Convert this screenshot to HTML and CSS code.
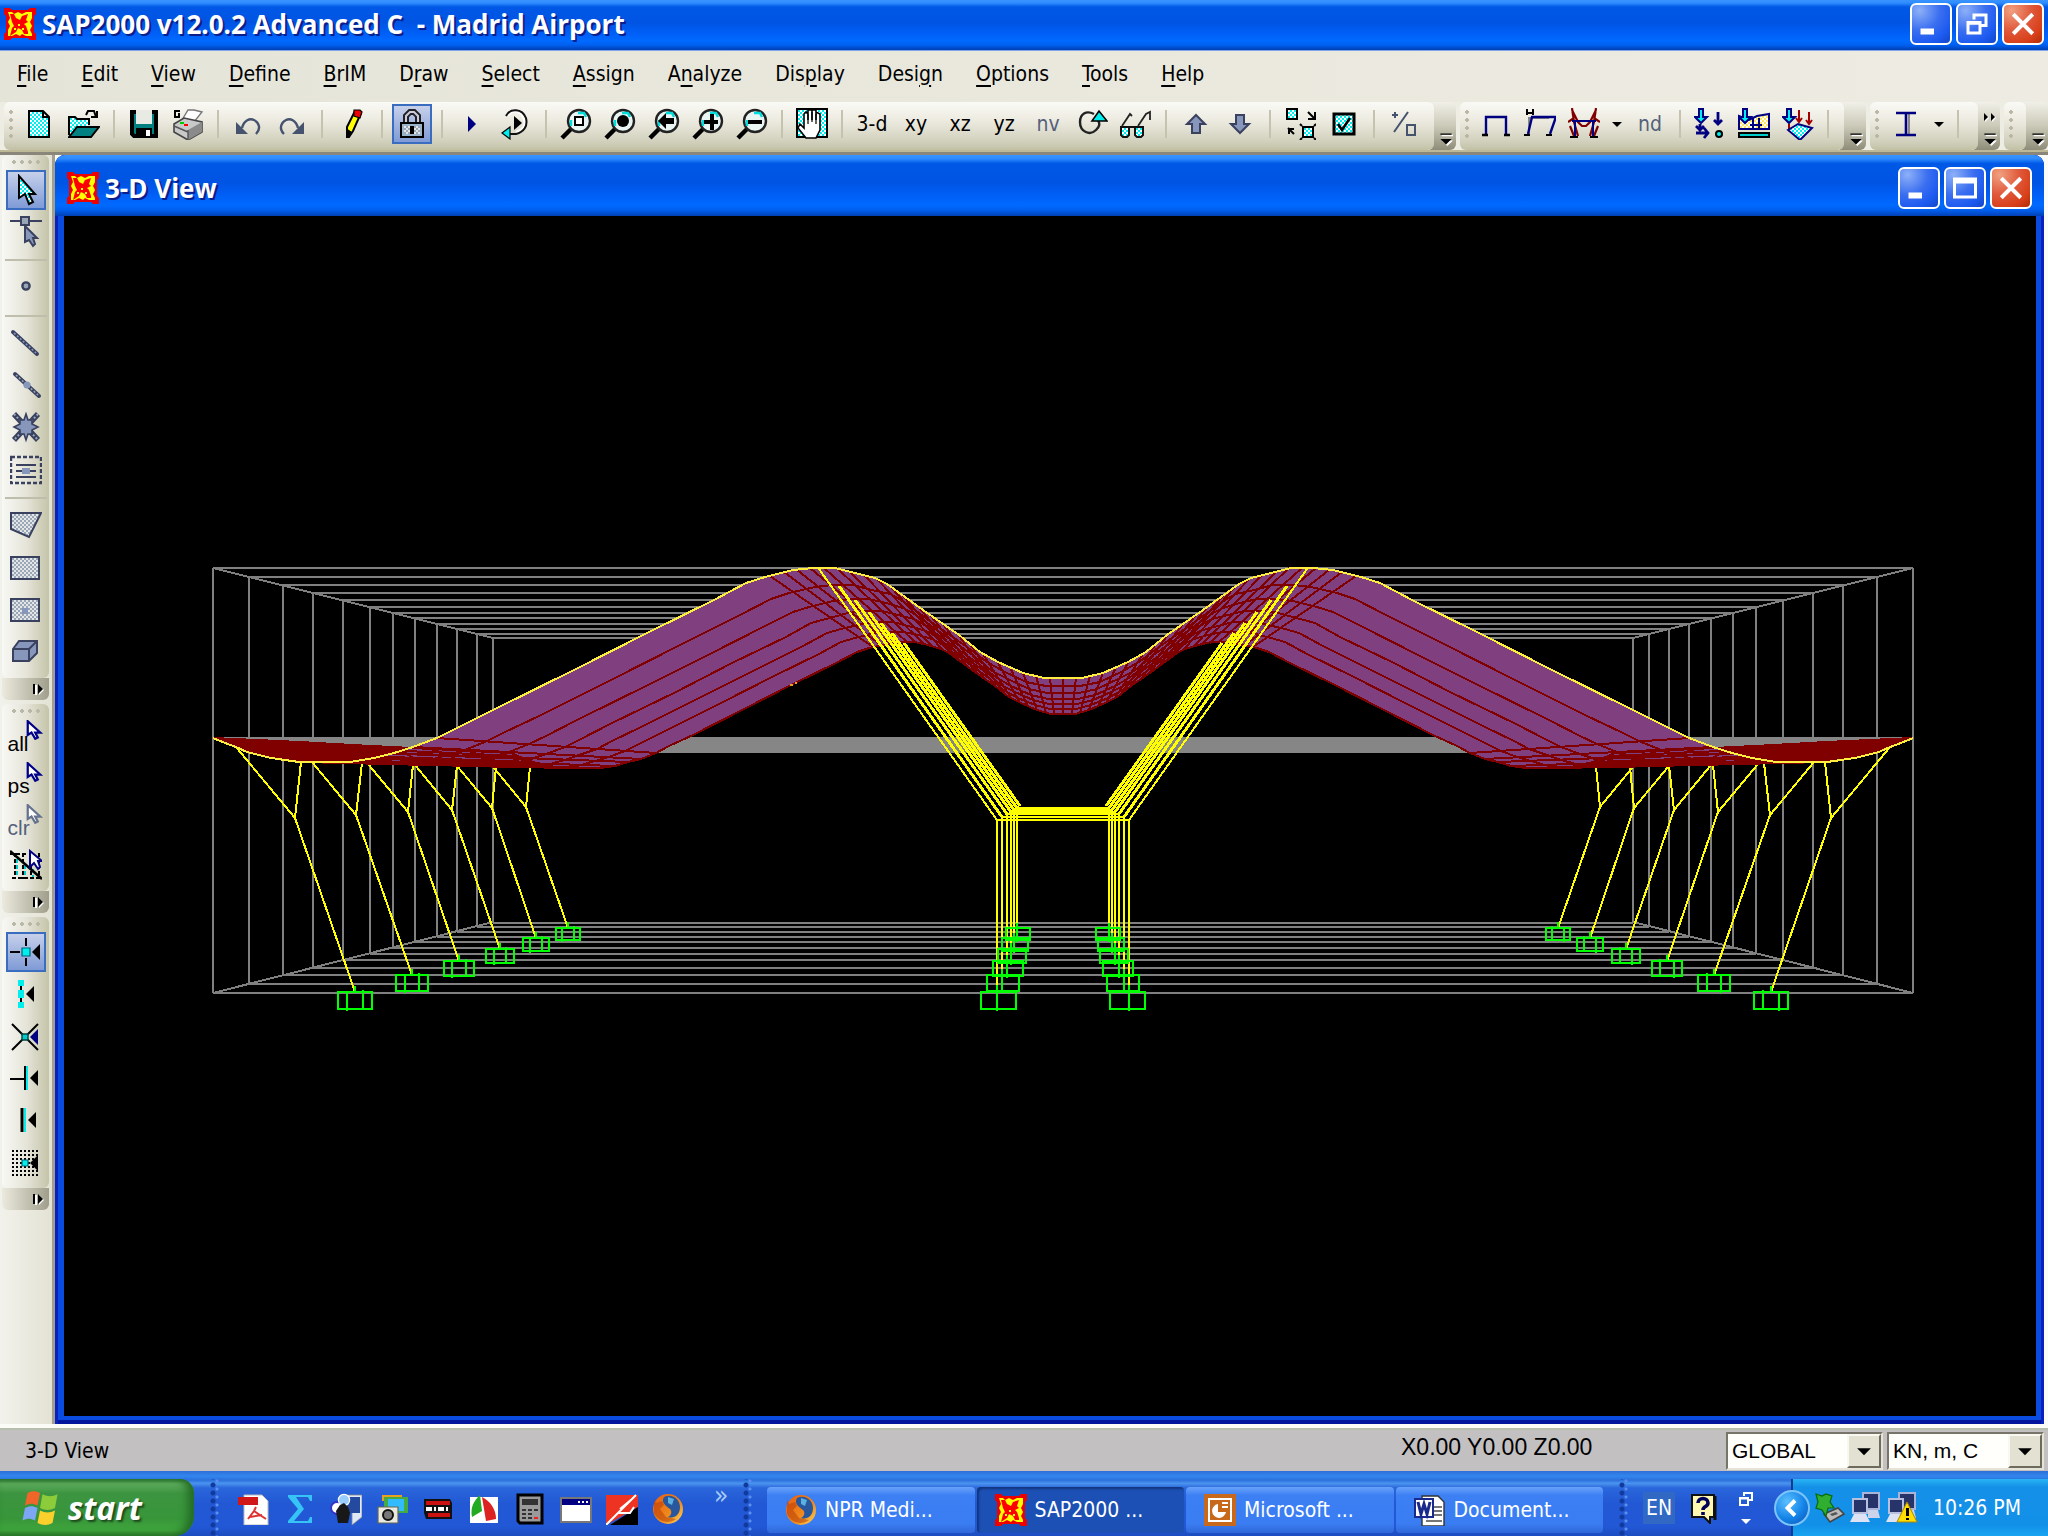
FILE: index.html
```html
<!DOCTYPE html>
<html lang="en">
<head>
    <meta charset="UTF-8">
    <meta name="viewport" content="width=device-width, initial-scale=1.0">
    <title>SAP2000 v12.0.2 Advanced C - Madrid Airport</title>
    <link rel="stylesheet" href="styles.css">
</head>
<body>

    <!-- icon sprite, every icon on a 16x16 grid -->
    <svg class="sprite" width="0" height="0" aria-hidden="true">
        <defs>
            <pattern id="dither" width="2" height="2" patternUnits="userSpaceOnUse">
                <rect width="2" height="2" fill="#fff"/><path fill="#00f0f0" d="M0 0h1v1H0zM1 1h1v1H1z"/>
            </pattern>
            <pattern id="ditherGray" width="2" height="2" patternUnits="userSpaceOnUse">
                <rect width="2" height="2" fill="#e4e6e6"/><path fill="#98a6b8" d="M0 0h1v1H0zM1 1h1v1H1z"/>
            </pattern>
            <pattern id="ditherYellow" width="2" height="2" patternUnits="userSpaceOnUse">
                <rect width="2" height="2" fill="#fff"/><path fill="#ffe95a" d="M0 0h1v1H0zM1 1h1v1H1z"/>
            </pattern>
            <linearGradient id="fox" x1="0" y1="0" x2="1" y2="1">
                <stop offset="0" stop-color="#e85c10"/><stop offset=".6" stop-color="#f08a1c"/><stop offset="1" stop-color="#ffd85a"/>
            </linearGradient>
        </defs>
        <symbol id="logo" viewBox="0 0 16 16">
            <path fill="#e00" d="M0 0h3l1 1h8l1-1h3v3l-1 1v8l1 1v3h-3l-1-1H4l-1 1H0v-3l1-1V4L0 3z"/>
            <path fill="#ff0" d="M2 2h2l1 1 2-1 2 1 2-1h3v3l-1 2 1 2-1 2 1 2v1h-3l-2-1-1 1-2-1-2 1H2v-3l1-2-1-2 1-2z"/>
            <path fill="#f00" d="M3 3h2l1 2 2 1 1-2 3-1-1 3 1 1-2 1 1 1 1 3v1h-2l-1-2-2-1-1 2-3 2 1-4 1-1-1-2z"/>
            <path fill="#ff0" d="M7 3h1v2H7zM7 8h1v1H7zM9 10h1v1H9zM5 10h1v1H5z"/>
        </symbol>
        <symbol id="new" viewBox="0 0 16 16"><path fill="url(#dither)" stroke="#000" d="M2.500 1.500h7l3 3v10h-10zM9.500 1.500v3h3"/></symbol>
        <symbol id="open" viewBox="0 0 16 16">
            <path fill="url(#dither)" stroke="#000" d="M.5 13.500v-9h3l1 1h6v3"/><path fill="#008080" stroke="#000" d="M.5 14.500l4-5h11l-4 5z"/>
            <path fill="none" stroke="#000" d="M9 3.500l1-2h3l1 3M11.500 4.500h3v-3"/>
        </symbol>
        <symbol id="save" viewBox="0 0 16 16"><path fill="#008080" stroke="#000" stroke-width="2" d="M2 2h12v12H3l-1-1z"/><path fill="#e8ebe4" d="M4 1h8v7H4z"/><path fill="#000" d="M4 10h8v4H4z"/><path fill="#fff" d="M9 11h2v3H9z"/></symbol>
        <symbol id="print" viewBox="0 0 16 16">
            <path fill="#fff" stroke="#777" stroke-width=".7" d="M5 6l3-5h3l4 1-4 5z"/>
            <path fill="#c9c9c9" stroke="#444" stroke-width=".8" d="M1 8l5-3 9 2v5l-7 4-7-4z"/><path fill="#8a8a8a" d="M8 11l7-4v5l-7 4z"/>
            <path fill="#f00" d="M6 8h2v1H6z"/><path fill="#0c0" d="M4 7h2v1H4z"/><path stroke="#555" stroke-width=".7" fill="none" d="M1 9l7 3M8 11v5"/>
            <path fill="none" stroke="#000" d="M4 1.500H1.500v3h2v-2"/>
        </symbol>
        <symbol id="undo" viewBox="0 0 16 16"><path fill="none" stroke="#45536f" stroke-width="1.200" d="M5 10c1-4 4-5 6-4s4 4 1 7"/><path fill="#45536f" d="M2 7v6h6z"/></symbol>
        <symbol id="redo" viewBox="0 0 16 16"><path fill="none" stroke="#45536f" stroke-width="1.200" d="M11 10c-1-4-4-5-6-4s-4 4-1 7"/><path fill="#45536f" d="M14 7v6H8z"/></symbol>
        <symbol id="pencil" viewBox="0 0 16 16"><path fill="#ff0" stroke="#000" d="M5.500 9.500l4-8h2l1 1-4 9-2 3h-1z"/><path d="M5 10l3 2-2 3H5z"/><path fill="#e00" stroke="#000" stroke-width=".6" d="M9 1h3l1 1-1 3-3-1z"/></symbol>
        <symbol id="lock" viewBox="0 0 16 16"><path fill="none" stroke="#222" stroke-width="3" d="M5 8V4l2-2h2l2 2v4"/><path fill="none" stroke="#ccd" d="M5 8V4l2-2h2l2 2v4"/><path fill="#9ab4cc" stroke="#000" d="M2.500 7.500h11v7h-11z"/><path fill="url(#ditherGray)" d="M4 9h8v4H4z"/><path d="M7 9h2v4H7z"/></symbol>
        <symbol id="play" viewBox="0 0 16 16"><path fill="#000080" d="M6 4l4 4-4 4z"/></symbol>
        <symbol id="replay" viewBox="0 0 16 16"><path fill="none" stroke="#fff" d="M4 4c3-4 7-2 8 2 1 3-1 5-4 6"/><path fill="none" stroke="#111" d="M3 4c2-4 8-4 10 1 1 4-1 7-5 8H4"/><path d="M7 4l4 3.500-4 3.500z"/><path fill="#0ee" stroke="#000" stroke-width=".6" d="M1 12.500l4-3v6z"/></symbol>
        <symbol id="lens" viewBox="0 0 16 16">
            <path stroke="#000" stroke-width="2.200" d="M1 15l5-5"/><circle cx="9.500" cy="6.500" r="5.500" fill="#e9f5f2" stroke="#222" stroke-width="1.200"/>
            <path fill="none" stroke="#0dd" stroke-width="1.200" d="M5.500 9V6M9 2.500h3l1 2"/>
        </symbol>
        <symbol id="zoomBox" viewBox="0 0 16 16"><use href="#lens"/><path fill="#fff" stroke="#000" d="M7.500 4.500h4v4h-4z"/></symbol>
        <symbol id="zoomFull" viewBox="0 0 16 16"><use href="#lens"/><circle cx="9.500" cy="6.500" r="3"/></symbol>
        <symbol id="zoomPrev" viewBox="0 0 16 16"><use href="#lens"/><path d="M5 6.500l4-4V5h4v3H9v2.500z"/></symbol>
        <symbol id="zoomIn" viewBox="0 0 16 16"><use href="#lens"/><path d="M6 6h3V3h2v3h2v2h-2v3H9V8H6z"/></symbol>
        <symbol id="zoomOut" viewBox="0 0 16 16"><use href="#lens"/><path d="M6 6h7v2H6z"/></symbol>
        <symbol id="hand" viewBox="0 0 16 16"><path fill="url(#dither)" stroke="#000" d="M.5.5h15v14H.5z"/><path fill="#fff" stroke="#000" stroke-width=".8" d="M5 15l-4-5 1-2 2 2V3l1-1 1 1v3-5h2v5-5h2v5-4l2 1v8l-2 4z"/><path stroke="#000" stroke-width=".6" d="M6 3v5M8 2v5M10 3v5"/></symbol>
        <symbol id="rotate" viewBox="0 0 16 16"><path fill="none" stroke="#222" stroke-width="1.200" d="M9 3C5 1 2 3 2 7c0 5 5 7 8 4 2-2 2-3 1-5"/><path fill="#0ee" stroke="#000" stroke-width=".8" d="M8 6.500l3.500-5 4 5z"/></symbol>
        <symbol id="glasses" viewBox="0 0 16 16"><path fill="none" stroke="#222" stroke-width=".9" d="M1 9l4-6 1 1M9 9l4-6 2-1v4"/><path fill="url(#dither)" stroke="#111" d="M.5 9.500h4v4l-1 1h-2l-1-1zM7.500 9.500h4v4l-1 1h-2l-1-1zM4 9.500h4"/></symbol>
        <symbol id="up" viewBox="0 0 16 16"><path fill="#8797bb" stroke="#39415f" d="M8 3.500l4.500 4.500h-2.500v4.500h-4v-4.500H3.500z"/></symbol>
        <symbol id="down" viewBox="0 0 16 16"><path fill="#8797bb" stroke="#39415f" d="M8 12.500l4.500-4.500h-2.500V3.500h-4v4.500H3.500z"/></symbol>
        <symbol id="shrink" viewBox="0 0 16 16"><path fill="url(#dither)" stroke="#000" d="M1.500.5h5v5h-5zM9.500 9.500h5v5h-5z"/><path fill="none" stroke="#000" d="M12 2l3 3M15.500 2v3.500h-3.500M2.500 10v3M2 10.500h3M2 10l3 3M8 8l1 1M16 8l-1 1M8 16l1-1M16 16l-1-1"/></symbol>
        <symbol id="check" viewBox="0 0 16 16"><path fill="url(#dither)" stroke="#000" stroke-width="1.500" d="M3 3h10v10H3z"/><path fill="none" stroke="#000" stroke-width="1.300" d="M5 8l2 3 4-6"/></symbol>
        <symbol id="percent" viewBox="0 0 16 16"><path fill="none" stroke="#45536f" d="M3 12l7-10M9.500 8.500h4v5h-4z"/><path fill="#45536f" d="M2 3h1V2h1v1h1v1H4v1H3V4H2z"/></symbol>
        <symbol id="frame" viewBox="0 0 16 16"><path fill="none" stroke="#000080" stroke-width="1.200" d="M3 13V4.500h10V13"/><path stroke="#000" stroke-width="1.300" d="M1 13.500h3M12 13.500h3"/></symbol>
        <symbol id="sway" viewBox="0 0 16 16"><path fill="none" stroke="#888" d="M2.500 13V5h10"/><path fill="none" stroke="#000080" stroke-width="1.200" d="M2 13l2-8.500h12L13 13"/><path stroke="#000" fill="none" d="M0 13.500h3M11 13.500h3M1.500.5v3M4.500.5v3M2 2.500h3"/></symbol>
        <symbol id="moment" viewBox="0 0 16 16"><path fill="none" stroke="#800000" stroke-width="1.100" d="M2 0l1 7 2 7M14 0l-1 7-2 7M2 1l3 6 2 2h2l2-2 3-6M0 7l3-2M16 7l-3-2M1 9l2 5M15 9l-2 5"/><path stroke="#000080" d="M2 6.500h12M3.500 7v7M12.500 7v7"/><path stroke="#000" d="M1 14.500h4M11 14.500h4"/></symbol>
        <symbol id="caret" viewBox="0 0 16 16"><path d="M3 6h10l-5 5z"/></symbol>
        <symbol id="bigArrow" viewBox="0 0 16 16"><path fill="#0ee" stroke="#000080" d="M2.500.5h2v4h2l-3 3-3-3h2z"/></symbol>
        <symbol id="jointLoad" viewBox="0 0 16 16"><use href="#bigArrow"/><path fill="none" stroke="#000080" stroke-width="1.400" d="M12 2v6M10 6l2 2 2-2M1 12.500h6M5 10l2 2.500-2 2.500M3 8v2M1 9l2 2 2-2"/><circle cx="12.500" cy="13" r="1.500" fill="#0ee" stroke="#000"/></symbol>
        <symbol id="frameLoad" viewBox="0 0 16 16"><path fill="url(#ditherYellow)" stroke="#000080" d="M.5 10.500V4l5 2 4-2 6-1v7.500z"/><path stroke="#000080" d="M7.500 5v5M10.500 5v5M6 8.500h6"/><use href="#bigArrow"/><path fill="#0cc" stroke="#000" d="M.5 12.500h15v2H.5z"/></symbol>
        <symbol id="areaLoad" viewBox="0 0 16 16"><use href="#bigArrow"/><path fill="none" stroke="#a00000" d="M8.500 1v6M7 5l1.500 2L10 5M13.500 2v6M12 6l1.500 2L15 6M3.500 8v3"/><path fill="url(#dither)" stroke="#000080" d="M3 11l5-3 7 2-6 6z"/></symbol>
        <symbol id="section" viewBox="0 0 16 16"><path fill="none" stroke="#888" d="M9.500 3v10"/><path fill="none" stroke="#000080" stroke-width="1.300" d="M3 2.500h10M3 13.500h10M8 3v10"/></symbol>
        <symbol id="pointer" viewBox="0 0 16 16"><path fill="url(#dither)" stroke="#000" d="M4.500 1v11l3-2 2 5 2-1-2-4h3z"/></symbol>
        <symbol id="reshape" viewBox="0 0 16 16"><path stroke="#39415f" d="M0 2.500h16"/><path fill="#98a6b8" stroke="#39415f" d="M5.500.5h4v4h-4z"/><path fill="#8797bb" stroke="#39415f" d="M7.500 5v8l2-1 2 3 1-1-1-3h2z"/></symbol>
        <symbol id="point" viewBox="0 0 16 16"><circle cx="8" cy="7" r="1.800" fill="#98a6b8" stroke="#39415f" stroke-width="1.200"/></symbol>
        <symbol id="line" viewBox="0 0 16 16"><path stroke="#39415f" stroke-width="2" stroke-linecap="round" d="M1.500 2l12 11"/><path stroke="#8797bb" stroke-width=".8" stroke-dasharray="1 1" d="M2 2.500l11 10"/></symbol>
        <symbol id="line2" viewBox="0 0 16 16"><path stroke="#39415f" stroke-width="2" stroke-linecap="round" d="M2.500 2l12 11"/><path stroke="#98a6b8" stroke-width=".8" stroke-dasharray="1 1" d="M3 2.500l11 10"/><circle cx="8.500" cy="7.500" r="1.800" fill="#8797bb"/></symbol>
        <symbol id="brace" viewBox="0 0 16 16"><path stroke="#39415f" stroke-width="2.800" d="M2 1l12 13M14 1L2 14"/><path stroke="#98a6b8" stroke-dasharray="1 1" d="M2 1l12 13M14 1L2 14"/><path fill="#8797bb" stroke="#39415f" stroke-width=".8" d="M8 1l1 3 2 0 0 2 3 1.500-3 1.500 0 2-2 0-1 3-1-3-2 0 0-2-3-1.500 3-1.500 0-2 2 0z"/></symbol>
        <symbol id="beams" viewBox="0 0 16 16"><path fill="none" stroke="#39415f" stroke-dasharray="2 1" stroke-width="1.200" d="M.5 1.500h15v13H.5z"/><path stroke="#39415f" d="M3 5.500h10M3 8.500h10M3 11.500h10"/><path fill="#8797bb" d="M6 7h4v3H6z"/></symbol>
        <symbol id="poly" viewBox="0 0 16 16"><path fill="url(#ditherGray)" stroke="#39415f" d="M.5 1.500h15l-6 12-9-4z"/></symbol>
        <symbol id="rect" viewBox="0 0 16 16"><path fill="url(#ditherGray)" stroke="#39415f" d="M.5 2.500h14v11H.5z"/></symbol>
        <symbol id="rect2" viewBox="0 0 16 16"><path fill="url(#ditherGray)" stroke="#39415f" d="M.5 2.500h14v11H.5z"/><path fill="#8797bb" d="M6 7h3v3H6z"/></symbol>
        <symbol id="cube" viewBox="0 0 16 16"><path fill="#8797bb" stroke="#39415f" d="M1.500 6.500l3-4h9v6l-4 4h-8zM1.500 6.500h8v6M9.500 6.500l4-4"/></symbol>
        <symbol id="cursor" viewBox="0 0 16 16"><path fill="#fff" stroke="currentColor" stroke-width="1.800" d="M3 1v11l3-2 3 5 2-1-2-4h4z"/></symbol>
        <symbol id="mesh" viewBox="0 0 16 16"><path fill="none" stroke="#000" stroke-dasharray="2 1" d="M2.500 2v13M6.500 2v13M10.500 2v13M14.500 2v13M0 2.500h9M1 14.500h15"/><path stroke="#0cc" stroke-dasharray="2 1" d="M3.500 5v9M7.500 8v6M11.500 10v4"/><path stroke="#000" stroke-width="1.300" d="M0 1l16 14"/><path fill="#fff" stroke="#000080" d="M10 1v8l2-2 2 3 1-1-1-3h2z"/></symbol>
        <symbol id="snapPoint" viewBox="0 0 16 16"><path stroke="#000" d="M8 1v4M8 11v4M0 8h5"/><path fill="#0ee" stroke="#067" stroke-width=".6" d="M6 6h4v4H6z"/><path d="M11 8l4-4v8z"/></symbol>
        <symbol id="snapMid" viewBox="0 0 16 16"><path stroke="#000" d="M5.500 2v12"/><path fill="#0ee" d="M4 1h3v3H4zM4 6h3v4H4zM4 12h3v3H4z"/><path d="M8 8l4-4v8z"/></symbol>
        <symbol id="snapCross" viewBox="0 0 16 16"><path stroke="#000" d="M1 2l13 13M14 2L1 15"/><path fill="#0cc" stroke="#044" stroke-width=".7" d="M6 7h3v3H6z"/><path fill="#000080" d="M10 8.500l4-4v8z"/></symbol>
        <symbol id="snapPerp" viewBox="0 0 16 16"><path stroke="#000" d="M0 8.500h7M7.500 2v12"/><path stroke="#0ee" d="M8.500 2v12"/><path d="M10 8l4-4v8z"/></symbol>
        <symbol id="snapLine" viewBox="0 0 16 16"><path stroke="#000" stroke-width="1.500" d="M6 2v12"/><path stroke="#0ee" d="M7.500 2v12"/><path d="M9 8l4-4v8z"/></symbol>
        <symbol id="snapGrid" viewBox="0 0 16 16"><path stroke="#000" stroke-dasharray="1 1" d="M1 2.500h14M1 4.500h14M1 6.500h14M1 8.500h14M1 10.500h14M1 12.500h14M1 14.500h14"/><path fill="#0ee" stroke="#067" stroke-width=".6" d="M6 7h3v3H6z"/><path d="M10 8.500l4-4v8z"/></symbol>
        <symbol id="more" viewBox="0 0 10 10"><path fill="#fff" d="M2 2h8v1H2zM2 6h8L6 10z"/><path d="M1 1h8v1H1zM1 5h8L5 9z"/></symbol>
        <symbol id="moreSide" viewBox="0 0 16 16"><path fill="#fff" d="M6 4h2v10H6zM10 4l5 5-5 5z"/><path d="M4 3h2v10H4zM9 3l5 5-5 5z"/></symbol>
        <symbol id="hidden" viewBox="0 0 14 10"><path fill="#fff" d="M2 2l4 4-4 4zM9 2l4 4-4 4z"/><path d="M1 1l4 4-4 4zM8 1l4 4-4 4z"/></symbol>
        <symbol id="min" viewBox="0 0 16 16"><path fill="#fff" d="M1 11h9v4H1z"/></symbol>
        <symbol id="max" viewBox="0 0 16 16"><path fill="#fff" d="M0 1h16v14H0zM2 5v8h12V5z" fill-rule="evenodd"/></symbol>
        <symbol id="restore" viewBox="0 0 16 16"><path fill="#fff" fill-rule="evenodd" d="M5 1h10v9h-4V5H5zM7 3v2h4v3h2V3zM1 6h10v9H1zM3 8.500V13h6V8.500z"/></symbol>
        <symbol id="close" viewBox="0 0 16 16"><path stroke="#fff" stroke-width="2.600" d="M1.500 1.500l13 13M14.500 1.500l-13 13"/></symbol>
        <symbol id="flag" viewBox="0 0 16 16"><path fill="#f0652a" d="M3 2c2-1 3-1 5 0L7 7C5 6 4 6 2 7z"/><path fill="#8ccc3a" d="M9 2.500c2 1 4 1 6 0L14 8c-2 1-4 1-6 0z"/><path fill="#7da7f5" d="M2 8c2-1 3-1 5 0l-1 5c-2-1-3-1-5 0z"/><path fill="#fbd02c" d="M8 9c2 1 4 1 6 0l-1 5c-2 1-4 1-6 0z"/></symbol>
        <symbol id="pdf" viewBox="0 0 16 16"><path fill="#fff" stroke="#bbb" stroke-width=".5" d="M3 1h9l3 3v12H3z"/><path fill="#d01818" d="M0 2h10v4H0z"/><path fill="none" stroke="#d33" d="M5 13l3-4 1-2M8 9l6 4M6 12l6-1"/></symbol>
        <symbol id="sigma" viewBox="0 0 16 16"><path fill="#35c4f5" d="M2 1h12v3h-1l-1-2H6l4 6-5 6h7l1-2h1v3H2v-1l5-6-5-6z"/></symbol>
        <symbol id="paw" viewBox="0 0 16 16"><path fill="#dfe8f6" stroke="#888" stroke-width=".4" d="M5 1h11v11l-5 4V7z"/><path fill="#234a9e" d="M8 2h7v8H8z"/><circle cx="3.500" cy="7.500" r="3" fill="#fff" stroke="#33c"/><circle cx="7" cy="3.500" r="2.800" fill="#9cf" stroke="#fff" stroke-width=".6"/><path fill="#181818" d="M3 9l2-3 2-1 2 2 1 3-1 5H4z"/></symbol>
        <symbol id="camera" viewBox="0 0 16 16"><path fill="#e8a020" d="M3 1h10v3H3z"/><path fill="#4a4" d="M4 2h12v8H4z"/><path fill="#3bf" d="M6 3h8v6H6z"/><path fill="#e9e9e0" stroke="#665" stroke-width=".6" d="M1 7h10v8H1z"/><circle cx="6" cy="11" r="2.500" fill="#777" stroke="#111"/></symbol>
        <symbol id="badge" viewBox="0 0 16 16"><path fill="#111" d="M1 3h13l1 2v8H2L1 10z"/><path fill="#c11" d="M2 4h12v2H2zM3 10h11v2H3z"/><path fill="#fff" d="M2 7h3v2H2zM6 7h1v2H6zM8 7h3v2H8zM12 7h1v2h-1z"/></symbol>
        <symbol id="leaf" viewBox="0 0 16 16"><path fill="#fff" d="M1 2h14v13H1z"/><path fill="#2a2" d="M6 1l1 8-5 3c-1-5 1-8 4-11z"/><path fill="#d22" d="M7 2c4 2 7 6 7 11l-5 1z"/></symbol>
        <symbol id="calc" viewBox="0 0 16 16"><path fill="#9a9a9a" stroke="#000" stroke-width="1.500" d="M2 1h12v14H3l-1-1z"/><path fill="#333" d="M4 3h8v3H4zM4 8h2v1H4zM7 8h2v1H7zM10 8h2v1h-2zM4 10h2v1H4zM7 10h2v1H7zM4 12h2v1H4zM7 12h2v1H7z"/><path fill="#e22" d="M10 12h2v1h-2z"/></symbol>
        <symbol id="dialog" viewBox="0 0 16 16"><path fill="#fff" stroke="#777" d="M.5 2.500h15v12H.5z"/><path fill="#000080" d="M1 3h14v3H1z"/><path fill="#fff" d="M9 4h1v1H9zM11 4h1v1h-1zM13 4h1v1h-1z"/></symbol>
        <symbol id="slash" viewBox="0 0 16 16"><path fill="#e32" d="M0 1h16v6L0 16z"/><path d="M16 7v9H2z"/><path fill="none" stroke="#fff" d="M0 16L15 1M6 10h6l2-3M7 8l6-5"/></symbol>
        <symbol id="firefox" viewBox="0 0 16 16"><circle cx="8" cy="8" r="7.500" fill="url(#fox)"/><path fill="#28579e" d="M6 2c4-2 8 1 8 5s-3 6-6 5c2-1 2-3 1-4S4 5 6 2z"/><path fill="#5ab0e0" d="M8 2l3 1-1 3-2-1z"/><path fill="#b33a08" d="M1 3l1 2 3-1 1 2-2 2 3 4 5 1c-4 3-9 1-11-3z" opacity=".5"/></symbol>
        <symbol id="ppt" viewBox="0 0 16 16"><path fill="#c8681a" d="M0 0h16v16H0z"/><path fill="#c8681a" stroke="#fff" d="M2.500 2.500h11v11h-11z"/><path fill="#fff" d="M7 5a3.500 3.500 0 1 0 4 4H7zM9 4h3v1H9zM9 6h3v1H9z"/></symbol>
        <symbol id="word" viewBox="0 0 16 16"><path fill="#fff" stroke="#333" stroke-width=".7" d="M4 1h8l3 3v12H4z"/><path stroke="#777" d="M10 6.500h4M10 8.500h4M10 10.500h4M6 13.500h8"/><path fill="#fff" stroke="#1a2a8c" d="M.5 2.500h9v9h-9z"/><path fill="none" stroke="#1a2a8c" stroke-width="1.500" d="M2 4l1.500 6L5 5l1.500 5L8 4"/></symbol>
        <symbol id="help" viewBox="0 0 16 16"><path fill="#fff8b0" stroke="#111" d="M2.500 1.500h11v11h-2v3l-3-3h-6z"/><path stroke="#111" stroke-width="1.500" d="M14 2v12"/><path fill="none" stroke="#00005a" stroke-width="1.800" d="M5.500 5.500c0-3 5-3 5 0 0 2-2.500 1.500-2.500 3.500M8 10v1.500"/></symbol>
        <symbol id="chevron" viewBox="0 0 16 16"><path fill="none" stroke="#fff" stroke-width="2.600" d="M10 3L5 8l5 5"/></symbol>
        <symbol id="usb" viewBox="0 0 16 16"><path fill="#bbb" stroke="#444" stroke-width=".8" d="M5 11l7-3 3 3-7 4z"/><path fill="#555" d="M8 11l3-1 1 1-3 1z"/><path fill="#2fae2f" stroke="#0a6a0a" stroke-width=".6" d="M1 1l3 1 2-1 3 1-1 3 2 3-3 0-1 4-2-3-3-1 1-3z"/></symbol>
        <symbol id="net" viewBox="0 0 16 16"><path fill="#27346a" stroke="#aab4d8" d="M6.500.5h8v8h-8z"/><path fill="#ccd2ea" d="M9 9h5l1 4H9z"/><path fill="#27346a" stroke="#b8c0e0" d="M1.500 3.500h7v7h-7z"/><path fill="#dde2f4" d="M2 11h6l2 4H0z"/></symbol>
        <symbol id="netWarn" viewBox="0 0 16 16"><use href="#net"/><path fill="#fd0" stroke="#a80" stroke-width=".5" d="M10.500 5l5 10h-10z"/><path d="M10 8h1.500v4H10zM10 13h1.500v1H10z"/></symbol>
    </svg>

    <header class="titlebar">
        <svg class="icon"><use href="#logo"/></svg>
        <h1 class="title">SAP2000 v12.0.2 Advanced C&nbsp; - Madrid Airport</h1>
        <div class="window-buttons">
            <button class="winbtn" aria-label="Minimize"><svg><use href="#min"/></svg></button>
            <button class="winbtn" aria-label="Restore"><svg><use href="#restore"/></svg></button>
            <button class="winbtn winbtn-close" aria-label="Close"><svg><use href="#close"/></svg></button>
        </div>
    </header>

    <nav class="menubar">
        <a href="#"><u>F</u>ile</a>
        <a href="#"><u>E</u>dit</a>
        <a href="#"><u>V</u>iew</a>
        <a href="#"><u>D</u>efine</a>
        <a href="#"><u>B</u>rIM</a>
        <a href="#">D<u>r</u>aw</a>
        <a href="#"><u>S</u>elect</a>
        <a href="#"><u>A</u>ssign</a>
        <a href="#">A<u>n</u>alyze</a>
        <a href="#">Dis<u>p</u>lay</a>
        <a href="#">Desi<u>g</u>n</a>
        <a href="#"><u>O</u>ptions</a>
        <a href="#"><u>T</u>ools</a>
        <a href="#"><u>H</u>elp</a>
    </nav>

    <div class="toolbars">
        <div class="toolbar">
            <span class="grip"></span>
            <button class="tool" aria-label="New"><svg class="icon"><use href="#new"/></svg></button>
            <button class="tool" aria-label="Open"><svg class="icon"><use href="#open"/></svg></button>
            <span class="sep"></span>
            <button class="tool" aria-label="Save"><svg class="icon"><use href="#save"/></svg></button>
            <button class="tool" aria-label="Print"><svg class="icon"><use href="#print"/></svg></button>
            <span class="sep"></span>
            <button class="tool" aria-label="Undo"><svg class="icon"><use href="#undo"/></svg></button>
            <button class="tool" aria-label="Redo"><svg class="icon"><use href="#redo"/></svg></button>
            <span class="sep"></span>
            <button class="tool" aria-label="Refresh"><svg class="icon"><use href="#pencil"/></svg></button>
            <span class="sep"></span>
            <button class="tool active" aria-label="Lock model"><svg class="icon"><use href="#lock"/></svg></button>
            <span class="sep"></span>
            <button class="tool" aria-label="Run analysis"><svg class="icon"><use href="#play"/></svg></button>
            <button class="tool" aria-label="Model alive"><svg class="icon"><use href="#replay"/></svg></button>
            <span class="sep"></span>
            <button class="tool" aria-label="Rubber band zoom"><svg class="icon"><use href="#zoomBox"/></svg></button>
            <button class="tool" aria-label="Full view"><svg class="icon"><use href="#zoomFull"/></svg></button>
            <button class="tool" aria-label="Previous zoom"><svg class="icon"><use href="#zoomPrev"/></svg></button>
            <button class="tool" aria-label="Zoom in"><svg class="icon"><use href="#zoomIn"/></svg></button>
            <button class="tool" aria-label="Zoom out"><svg class="icon"><use href="#zoomOut"/></svg></button>
            <span class="sep"></span>
            <button class="tool" aria-label="Pan"><svg class="icon"><use href="#hand"/></svg></button>
            <span class="sep"></span>
            <button class="tool">3-d</button>
            <button class="tool">xy</button>
            <button class="tool">xz</button>
            <button class="tool">yz</button>
            <button class="tool dim">nv</button>
            <button class="tool" aria-label="Rotate view"><svg class="icon"><use href="#rotate"/></svg></button>
            <button class="tool" aria-label="Perspective"><svg class="icon"><use href="#glasses"/></svg></button>
            <span class="sep"></span>
            <button class="tool" aria-label="Move up"><svg class="icon"><use href="#up"/></svg></button>
            <button class="tool" aria-label="Move down"><svg class="icon"><use href="#down"/></svg></button>
            <span class="sep"></span>
            <button class="tool" aria-label="Shrink objects"><svg class="icon"><use href="#shrink"/></svg></button>
            <button class="tool" aria-label="Display options"><svg class="icon"><use href="#check"/></svg></button>
            <span class="sep"></span>
            <button class="tool" aria-label="Assign to group"><svg class="icon"><use href="#percent"/></svg></button>
        </div>
        <button class="overflow" aria-label="More"><svg><use href="#more"/></svg></button>
        <div class="toolbar">
            <span class="grip"></span>
            <button class="tool" aria-label="Undeformed shape"><svg class="icon"><use href="#frame"/></svg></button>
            <button class="tool" aria-label="Deformed shape"><svg class="icon"><use href="#sway"/></svg></button>
            <button class="tool" aria-label="Forces"><svg class="icon"><use href="#moment"/></svg></button>
            <button class="tool narrow" aria-label="Force list"><svg class="small-icon"><use href="#caret"/></svg></button>
            <button class="tool dim">nd</button>
            <span class="sep"></span>
            <button class="tool" aria-label="Joint loads"><svg class="icon"><use href="#jointLoad"/></svg></button>
            <button class="tool" aria-label="Frame loads"><svg class="icon"><use href="#frameLoad"/></svg></button>
            <button class="tool" aria-label="Area loads"><svg class="icon"><use href="#areaLoad"/></svg></button>
            <span class="sep"></span>
        </div>
        <button class="overflow" aria-label="More"><svg><use href="#more"/></svg></button>
        <div class="toolbar grow">
            <span class="grip"></span>
            <button class="tool" aria-label="Section"><svg class="icon"><use href="#section"/></svg></button>
            <button class="tool narrow" aria-label="Section list"><svg class="small-icon"><use href="#caret"/></svg></button>
            <span class="sep"></span>
        </div>
        <button class="overflow" aria-label="More"><svg class="hidden-tools"><use href="#hidden"/></svg><svg><use href="#more"/></svg></button>
        <div class="toolbar"><span class="grip"></span></div>
        <button class="overflow" aria-label="More"><svg><use href="#more"/></svg></button>
    </div>

    <div class="workspace">
        <aside class="sidebar">
            <div class="sidetools">
                <span class="side-grip"></span>
                <button class="side-tool active" aria-label="Select"><svg class="icon"><use href="#pointer"/></svg></button>
                <button class="side-tool" aria-label="Reshape"><svg class="icon"><use href="#reshape"/></svg></button>
                <span class="side-sep"></span>
                <button class="side-tool" aria-label="Draw joint"><svg class="icon"><use href="#point"/></svg></button>
                <span class="side-sep"></span>
                <button class="side-tool" aria-label="Draw frame"><svg class="icon"><use href="#line"/></svg></button>
                <button class="side-tool" aria-label="Quick frame"><svg class="icon"><use href="#line2"/></svg></button>
                <button class="side-tool" aria-label="Quick braces"><svg class="icon"><use href="#brace"/></svg></button>
                <button class="side-tool" aria-label="Secondary beams"><svg class="icon"><use href="#beams"/></svg></button>
                <span class="side-sep"></span>
                <button class="side-tool" aria-label="Poly area"><svg class="icon"><use href="#poly"/></svg></button>
                <button class="side-tool" aria-label="Rectangular area"><svg class="icon"><use href="#rect"/></svg></button>
                <button class="side-tool" aria-label="Quick area"><svg class="icon"><use href="#rect2"/></svg></button>
                <button class="side-tool" aria-label="Solid"><svg class="icon"><use href="#cube"/></svg></button>
            </div>
            <button class="side-overflow" aria-label="More"><svg><use href="#moreSide"/></svg></button>
            <div class="sidetools">
                <span class="side-grip"></span>
                <button class="side-tool lettered">all<svg><use href="#cursor"/></svg></button>
                <button class="side-tool lettered">ps<svg><use href="#cursor"/></svg></button>
                <button class="side-tool lettered dim">clr<svg><use href="#cursor"/></svg></button>
                <button class="side-tool" aria-label="Intersecting line"><svg class="icon"><use href="#mesh"/></svg></button>
            </div>
            <button class="side-overflow" aria-label="More"><svg><use href="#moreSide"/></svg></button>
            <div class="sidetools">
                <span class="side-grip"></span>
                <button class="side-tool active" aria-label="Snap to points"><svg class="icon"><use href="#snapPoint"/></svg></button>
                <button class="side-tool" aria-label="Snap to midpoints"><svg class="icon"><use href="#snapMid"/></svg></button>
                <button class="side-tool" aria-label="Snap to intersections"><svg class="icon"><use href="#snapCross"/></svg></button>
                <button class="side-tool" aria-label="Snap perpendicular"><svg class="icon"><use href="#snapPerp"/></svg></button>
                <button class="side-tool" aria-label="Snap to lines"><svg class="icon"><use href="#snapLine"/></svg></button>
                <button class="side-tool" aria-label="Snap to grid"><svg class="icon"><use href="#snapGrid"/></svg></button>
            </div>
            <button class="side-overflow" aria-label="More"><svg><use href="#moreSide"/></svg></button>
        </aside>

        <main class="child">
            <div class="child-title">
                <svg class="icon"><use href="#logo"/></svg>
                <h2 class="title">3-D View</h2>
                <div class="window-buttons">
                    <button class="winbtn" aria-label="Minimize view"><svg><use href="#min"/></svg></button>
                    <button class="winbtn" aria-label="Maximize view"><svg><use href="#max"/></svg></button>
                    <button class="winbtn winbtn-close" aria-label="Close view"><svg><use href="#close"/></svg></button>
                </div>
            </div>
            <svg class="scene" id="scene" viewBox="64 216 1972 1200" role="img" aria-label="Wireframe of the roof"></svg>
        </main>
    </div>

    <footer class="status">
        <span class="status-name">3-D View</span>
        <span class="coords">X0.00 Y0.00 Z0.00</span>
        <label class="combo"><select aria-label="Coordinate system"><option>GLOBAL</option></select><span class="combo-arrow"><svg><use href="#caret"/></svg></span></label>
        <label class="combo"><select aria-label="Units"><option>KN, m, C</option></select><span class="combo-arrow"><svg><use href="#caret"/></svg></span></label>
    </footer>

    <div class="taskbar">
        <button class="start"><svg><use href="#flag"/></svg>start</button>
        <span class="task-grip"></span>
        <div class="quick">
            <a href="#" aria-label="PDF"><svg class="icon"><use href="#pdf"/></svg></a>
            <a href="#" aria-label="Sigma"><svg class="icon"><use href="#sigma"/></svg></a>
            <a href="#" aria-label="Viewer"><svg class="icon"><use href="#paw"/></svg></a>
            <a href="#" aria-label="Pictures"><svg class="icon"><use href="#camera"/></svg></a>
            <a href="#" aria-label="Reader"><svg class="icon"><use href="#badge"/></svg></a>
            <a href="#" aria-label="Plots"><svg class="icon"><use href="#leaf"/></svg></a>
            <a href="#" aria-label="Calculator"><svg class="icon"><use href="#calc"/></svg></a>
            <a href="#" aria-label="Desktop"><svg class="icon"><use href="#dialog"/></svg></a>
            <a href="#" aria-label="Designer"><svg class="icon"><use href="#slash"/></svg></a>
            <a href="#" aria-label="Firefox"><svg class="icon"><use href="#firefox"/></svg></a>
        </div>
        <span class="more-quick">»</span>
        <span class="task-grip"></span>
        <div class="tasks">
            <button class="task"><svg class="icon"><use href="#firefox"/></svg>NPR Medi...</button>
            <button class="task current"><svg class="icon"><use href="#logo"/></svg>SAP2000 ...</button>
            <button class="task"><svg class="icon"><use href="#ppt"/></svg>Microsoft ...</button>
            <button class="task"><svg class="icon"><use href="#word"/></svg>Document...</button>
        </div>
        <span class="task-grip"></span>
        <div class="lang">
            <button class="lang-code">EN</button>
            <button class="lang-help" aria-label="Help"><svg class="icon"><use href="#help"/></svg></button>
            <button class="lang-restore" aria-label="Language bar options"><svg><use href="#restore"/></svg><span class="tiny-caret"></span></button>
        </div>
        <div class="tray">
            <button class="tray-toggle" aria-label="Show hidden icons"><svg><use href="#chevron"/></svg></button>
            <svg class="icon"><use href="#usb"/></svg>
            <svg class="icon"><use href="#net"/></svg>
            <svg class="icon"><use href="#netWarn"/></svg>
            <time class="clock">10:26 PM</time>
        </div>
    </div>

    <script src="scene.js"></script>
</body>
</html>
```

FILE: styles.css
```css
* {
    box-sizing: border-box;
}
body {
    margin: 0;
    min-height: 100vh;
    display: flex;
    flex-direction: column;
    background: #e9e8dc;
    color: #000;
    font-family: "DejaVu Sans Condensed", "DejaVu Sans", sans-serif;
    font-size: 21px;
}
button {
    font: inherit;
    color: inherit;
    padding: 0;
    border: 0;
    background: none;
}
a {
    color: inherit;
    text-decoration: none;
}
.sprite {
    position: absolute;
}
.icon {
    width: 32px;
    height: 32px;
    flex: none;
    display: block;
}
.small-icon {
    width: 16px;
    height: 16px;
    display: block;
}

/* title bars */
.titlebar,
.child-title {
    display: flex;
    align-items: center;
    background: linear-gradient(#3a93ff 0, #2f8cff 6%, #0058e6 14%, #0054e3 45%, #0060f8 68%, #006aff 82%, #0060f0 90%, #003fb4 100%);
}
.titlebar {
    height: 51px;
    padding: 0 4px 2px;
    border-bottom: 1px solid #7fa6e8;
}
.title {
    flex: 1;
    margin: 0 0 0 6px;
    color: #fff;
    font-family: "Open Sans", sans-serif;
    font-size: 26px;
    font-weight: bold;
    text-shadow: 2px 2px 0 #0a1f8c;
}
.window-buttons {
    display: flex;
    gap: 4px;
}
.winbtn {
    width: 42px;
    height: 42px;
    display: grid;
    place-items: center;
    border: 2px solid #fff;
    border-radius: 6px;
    background: radial-gradient(circle at 20% 15%, #8db0f8, #3b6ff0 45%, #1c5af0 75%, #1346c8);
}
.winbtn svg {
    width: 24px;
    height: 24px;
}
.winbtn-close {
    background: radial-gradient(circle at 20% 15%, #f0a080, #e0583a 45%, #d8401a 75%, #b02c08);
}

/* menu */
.menubar {
    height: 51px;
    display: flex;
    align-items: center;
    gap: 33px;
    padding: 0 17px 6px;
    background: linear-gradient(90deg, #e5e4d8, #eeece2);
}
.menubar u {
    text-underline-offset: 4px;
    text-decoration-thickness: 2px;
}

/* horizontal toolbars */
.toolbars {
    height: 53px;
    display: flex;
    padding-left: 4px;
    background: #eeede4;
    border-bottom: 3px solid #8a877a;
    box-shadow: inset 0 -2px 0 #bdb997;
}
.toolbar {
    height: 48px;
    display: flex;
    align-items: center;
    padding: 0 8px 4px 0;
    border-radius: 6px;
    background: linear-gradient(#fafaf6, #eceadf 40%, #d3d2bf 80%, #c2c1a6);
    position: relative;
    z-index: 1;
}
.toolbar.grow {
    flex: 1;
}
.grip {
    width: 14px;
    height: 32px;
    background: radial-gradient(circle, #b9b7a6 2px, transparent 2px) 0 0 / 14px 8px;
}
.sep {
    width: 16px;
    height: 28px;
    background: linear-gradient(#c5c3b0, #c5c3b0) center / 2px 100% no-repeat;
}
.tool {
    width: 44px;
    height: 40px;
    display: flex;
    align-items: center;
    justify-content: center;
}
.tool.narrow {
    width: 22px;
}
.active {
    width: 40px;
    height: 40px;
    border: 2px solid #3a6cc0;
    background: linear-gradient(#c6d0ea, #7f9ad6);
}
.toolbar .active {
    width: 40px;
    margin: 0 2px;
}
.dim {
    color: #55617c;
}
.overflow {
    width: 26px;
    height: 48px;
    margin-left: -4px;
    padding: 0 2px 4px 8px;
    display: flex;
    flex-direction: column;
    align-items: center;
    justify-content: flex-end;
    gap: 10px;
    border-radius: 0 6px 6px 0;
    background: linear-gradient(#f1f0e8, #cbc9b8 50%, #8f8d79);
}
.overflow + .toolbar {
    margin-left: 4px;
}
.overflow svg {
    width: 14px;
    height: 14px;
    display: block;
}
.overflow .hidden-tools {
    height: 10px;
}

/* left toolbars */
.workspace {
    flex: 1;
    display: flex;
    padding-right: 4px;
    background: #fbfbf8;
    border-bottom: 4px solid #fbfbf8;
}
.sidebar {
    width: 55px;
    flex: none;
    padding: 0 3px 0 2px;
    background: linear-gradient(90deg, #f2f2ec, #e3e2d4);
    border-right: 3px solid #a29f8c;
}
.sidetools {
    display: flex;
    flex-direction: column;
    align-items: center;
    padding-bottom: 5px;
    border-radius: 6px;
    background: linear-gradient(90deg, #f8f8f4, #e6e5da 50%, #c5c4a9);
}
.side-grip {
    width: 32px;
    height: 14px;
    background: radial-gradient(circle, #b9b7a6 2px, transparent 2px) 0 0 / 8px 14px;
}
.side-tool {
    width: 40px;
    height: 42px;
    display: flex;
    align-items: center;
    justify-content: center;
}
.side-tool.active {
    height: 40px;
    margin: 1px 0;
}
.side-sep {
    width: 42px;
    height: 14px;
    background: linear-gradient(#bfbdab, #bfbdab) center / 100% 2px no-repeat;
}
.side-overflow {
    width: 100%;
    height: 22px;
    margin-bottom: 4px;
    display: flex;
    align-items: center;
    justify-content: flex-end;
    padding-right: 4px;
    border-radius: 0 0 6px 6px;
    background: linear-gradient(90deg, #eceade, #a09e8b);
}
.side-overflow svg {
    width: 16px;
    height: 16px;
}
.lettered {
    align-items: flex-end;
    justify-content: flex-start;
    padding: 0 0 6px 2px;
    font-family: "Liberation Sans", sans-serif;
    line-height: 20px;
    position: relative;
}
.lettered svg {
    position: absolute;
    top: 2px;
    right: 2px;
    width: 20px;
    height: 20px;
    color: #00008b;
}
.lettered.dim svg {
    color: #66738f;
}

/* child window */
.child {
    flex: 1;
    min-width: 0;
    display: flex;
    flex-direction: column;
    padding: 0 8px 8px 9px;
    border-radius: 10px 10px 0 0;
    background: #0a4be0;
    box-shadow: inset 3px 0 0 #0a20c0, inset -3px 0 0 #0a20c0, inset 0 -4px 0 #00149c;
}
.child-title {
    height: 61px;
    margin: 0 -8px 0 -9px;
    padding: 4px 12px 0;
    border-radius: 10px 10px 0 0;
}
.scene {
    flex: 1;
    width: 100%;
    min-height: 0;
    display: block;
    background: #000;
}

/* drawing */
.grid {
    fill: none;
    stroke: #808080;
    stroke-width: 2;
}
.plane {
    fill: #868686;
}
.roof {
    fill: #804080;
    stroke: #804080;
    stroke-width: 1;
}
.roof-line {
    fill: none;
    stroke: #800000;
    stroke-width: 2;
}
.underside {
    fill: #800000;
}
.frame-line {
    fill: none;
    stroke: #ffff00;
    stroke-width: 2;
}
.strut {
    fill: none;
    stroke: #ffff00;
    stroke-width: 3;
}
.edge {
    fill: none;
    stroke: #ffee40;
    stroke-width: 2;
}
.mark {
    fill: #e8a020;
}
.support {
    fill: none;
    stroke: #00ff00;
    stroke-width: 2;
}

/* status bar */
.status {
    height: 43px;
    display: flex;
    align-items: center;
    gap: 4px;
    padding: 0 4px 0 25px;
    background: #c3c0c2;
    border-top: 2px solid #b8bfae;
}
.status-name {
    flex: 1;
}
.coords {
    width: 321px;
    padding-bottom: 6px;
    font-family: "Liberation Sans", sans-serif;
    font-size: 23px;
}
.combo {
    width: 157px;
    height: 38px;
    display: flex;
    background: #fffffc;
    border: 2px solid #77756a;
    border-right-color: #e6e4d6;
    border-bottom-color: #e6e4d6;
}
.combo select {
    flex: 1;
    min-width: 0;
    appearance: none;
    border: 0;
    padding: 0 0 0 4px;
    background: none;
    color: #000;
    font-family: "Liberation Sans", sans-serif;
    font-size: 21px;
}
.combo-arrow {
    width: 34px;
    display: grid;
    place-items: center;
    background: #e3e1d2;
    border: 2px solid #f8f7f0;
    border-right-color: #6d6b5e;
    border-bottom-color: #6d6b5e;
}
.combo-arrow svg {
    width: 22px;
    height: 22px;
}

/* taskbar */
.taskbar {
    height: 65px;
    display: flex;
    align-items: stretch;
    padding-top: 8px;
    color: #fff;
    background: linear-gradient(#2f6fd8 0, #3286ee 8%, #2c70dc 14%, #4a94ee 19%, #2a66dc 26%, #2258d4 50%, #2258d6 85%, #1c4cc0 100%);
}
.start {
    width: 194px;
    display: flex;
    align-items: center;
    gap: 8px;
    padding-left: 20px;
    border-radius: 0 14px 20px 0;
    background: linear-gradient(#2f7a34 0, #5fae5f 8%, #3c9440 25%, #38963a 70%, #3fa63c 90%, #2e7d2c 100%);
    box-shadow: inset -6px 0 8px #236b25;
    font-family: "Open Sans", sans-serif;
    font-size: 32px;
    font-weight: bold;
    font-style: italic;
    text-shadow: 2px 2px 2px #1c4a1c;
}
.start svg {
    width: 40px;
    height: 40px;
}
.task-grip {
    width: 40px;
    background: radial-gradient(circle at 4px 4px, #123a9c 2px, transparent 3px) 15px 10px / 8px 8px repeat-y,
                radial-gradient(circle at 4px 4px, #5a90f0 1px, transparent 2px) 19px 14px / 8px 8px repeat-y;
}
.quick {
    display: flex;
    align-items: center;
    gap: 14px;
    padding: 2px 0 0 4px;
}
.more-quick {
    width: 43px;
    padding-left: 30px;
    color: #a8ccf8;
    font-size: 26px;
    line-height: 32px;
}
.tasks {
    flex: 1;
    display: flex;
    gap: 2px;
    padding: 8px 0 3px;
}
.task {
    flex: 1;
    min-width: 0;
    display: flex;
    align-items: center;
    gap: 8px;
    padding-left: 18px;
    border-radius: 4px;
    background: linear-gradient(#6aa2fa 0, #3c80f4 18%, #3a7cf2 80%, #2f68d8 100%);
    white-space: nowrap;
}
.task.current {
    background: #1d50b4;
    box-shadow: inset 2px 2px 2px #12357e;
}
.lang {
    display: flex;
    align-items: center;
    gap: 12px;
    width: 148px;
}
.lang-code {
    width: 32px;
    height: 32px;
    background: #3068c4;
}
.lang-restore {
    width: 30px;
    display: grid;
    justify-items: center;
    gap: 12px;
}
.lang-restore svg {
    width: 16px;
    height: 16px;
}
.tiny-caret {
    border: 5px solid transparent;
    border-top-color: #fff;
    border-bottom: 0;
}
.tray {
    width: 257px;
    display: flex;
    align-items: center;
    gap: 4px;
    border-left: 2px solid #0c3c90;
    background: linear-gradient(#28b4f4 0, #1590e8 14%, #1290e8 80%, #18a4f0 100%);
}
.tray-toggle {
    width: 36px;
    height: 36px;
    margin-left: -19px;
    display: grid;
    place-items: center;
    border-radius: 50%;
    border: 2px solid #7cc4f8;
    background: radial-gradient(circle at 35% 30%, #5cc0ff, #1484e8 55%, #0c50b4);
}
.tray-toggle svg {
    width: 24px;
    height: 24px;
}
.clock {
    flex: 1;
    padding-right: 16px;
    text-align: center;
}
```

FILE: scene.js
```js
// one point perspective: every depth is the front plane scaled about this point
const VX = 1063, VY = 780;
const scene = document.getElementById('scene');

// depths of the grid planes, of the frames, and of the rear roof edge
const gridX = [213, 249, 283, 313, 343, 370, 393, 415, 437, 457, 477, 493];
const frames = [1, 0.92, 0.853, 0.795, 0.744, 0.699];
const REAR = 0.65;

// front edge of the roof, left half
const edge = [[213, 738], [225, 743], [236, 747], [247, 752], [271, 758], [299, 762], [350, 762], [374, 758],
    [394, 753], [413, 747], [437, 738], [457, 728], [493, 710], [576, 669], [647, 633], [714, 600], [746, 583],
    [765, 577], [793, 570], [813, 568], [835, 568], [855, 573], [875, 578], [887, 584], [923, 610], [959, 635],
    [980, 652], [998, 662], [1023, 673], [1044, 678], [1063, 678]];

function at(p, s) {
    return [Math.round(VX + (p[0] - VX) * s), Math.round(VY + (p[1] - VY) * s)];
}

function mirror(p) {
    return [2 * VX - p[0], p[1]];
}

function add(points, cls, close) {
    const path = document.createElementNS('http://www.w3.org/2000/svg', 'path');
    path.setAttribute('d', 'M' + points.map(p => p.join(' ')).join('L') + (close ? 'Z' : ''));
    path.setAttribute('class', cls);
    path.setAttribute('shape-rendering', 'crispEdges');
    scene.appendChild(path);
}

function draw(points, cls, close) {
    add(points, cls, close);
    add(points.map(mirror), cls, close);
}

function edgeY(x) {
    const i = edge.findIndex(p => p[0] >= x);
    if (i < 1) return edge[0][1];
    const [a, b] = [edge[i - 1], edge[i]];
    return a[1] + (b[1] - a[1]) * (x - a[0]) / (b[0] - a[0]);
}

function drawGrid() {
    gridX.forEach(x => {
        const s = (VX - x) / 850;
        const top = at([213, 568], s), bottom = at([213, 993], s);
        draw([top, [VX, top[1]]], 'grid');
        draw([bottom, [VX, bottom[1]]], 'grid');
        draw([top, bottom], 'grid');
    });
    draw([[213, 568], [493, 638]], 'grid');
    draw([[213, 993], [493, 922]], 'grid');
    draw([[213, 737], [VX, 737], [VX, 753], [493, 753]], 'plane', true);
}

function drawSupport(foot, left, right, inner, s) {
    const [x, y] = at(foot, s);
    const l = Math.round(left * s), r = Math.round(right * s), h = Math.round(17 * s), i = Math.round(inner * s);
    draw([[x - l, y], [x + r, y], [x + r, y + h], [x - l, y + h]], 'support', true);
    if (i) {
        draw([[x - i, y], [x - i, y + h + 2]], 'support');
        draw([[x + i, y - 2], [x + i, y + h]], 'support');
        draw([[x, y], [x, y - 6]], 'support');
    } else {
        draw([[x, y - 8], [x, y + h + 2]], 'support');
    }
}

function drawSideColumns() {
    frames.slice().reverse().forEach(s => {
        draw([[236, 747], [295, 818], [355, 992]].map(p => at(p, s)), 'frame-line');
        draw([[301, 762], [295, 818]].map(p => at(p, s)), 'frame-line');
        drawSupport([355, 992], 17, 17, 8, s);
    });
}

function drawRoof() {
    for (let i = 1; i < edge.length; i++) {
        draw([edge[i - 1], edge[i], at(edge[i], REAR), at(edge[i - 1], REAR)], 'roof', true);
    }
    const nodes = [213, 225, 236, 247, 259, 271, 285, 299, 316, 333, 350, 374, 394, 413, 437];
    for (let k = 22; k >= 0; k--) nodes.push(VX - k * 13.3);
    nodes.forEach(x => {
        const p = [x, edgeY(x)];
        draw([at(p, 1), at(p, REAR)], 'roof-line');
    });
    frames.slice(1).concat(REAR).forEach(s => draw(edge.map(p => at(p, s)), 'roof-line'));
    draw([[213, 737], [300, 741], [370, 745], [410, 747]].concat(edge.slice(1, 9).reverse()), 'underside', true);
    draw(edge, 'edge');
    add([[790, 684], [793, 684], [793, 686], [790, 686]], 'mark', true);
    add([[795, 682], [797, 682], [797, 684], [795, 684]], 'mark', true);
}

function drawCenter() {
    frames.concat(REAR).forEach((s, i) => {
        draw([[819, 569], [997, 820]].map(p => at(p, s)), i ? 'strut' : 'frame-line');
    });
    frames.forEach(s => {
        drawSupport([997, 992], 16, 19, 0, s);
        draw([[VX, 820], [997, 820], [997, 985]].map(p => at(p, s)), 'frame-line');
    });
}

drawGrid();
drawSideColumns();
drawRoof();
drawCenter();
```
